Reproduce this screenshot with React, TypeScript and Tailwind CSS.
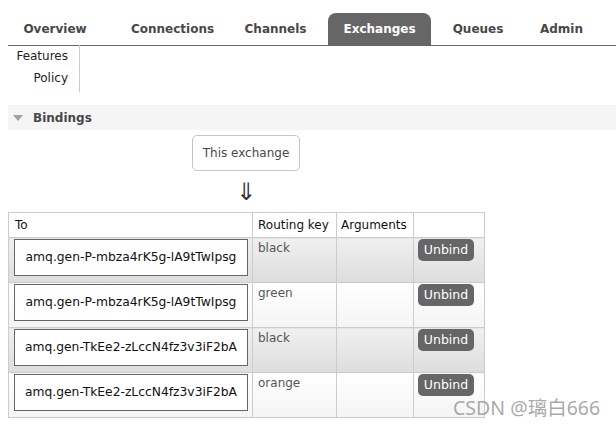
import React from "react";

const tabs = [
  { name: "Overview", w: "w-[94px]", ml: "" },
  { name: "Connections", w: "w-[141px]", ml: "" },
  { name: "Channels", w: "w-[65px]", ml: "" },
  { name: "Exchanges", w: "w-[103px]", ml: "ml-[20px]", active: true },
  { name: "Queues", w: "w-[94px]", ml: "" },
  { name: "Admin", w: "w-[73px]", ml: "" },
];

const rows = [
  { to: "amq.gen-P-mbza4rK5g-lA9tTwIpsg", key: "black", alt: 1 },
  { to: "amq.gen-P-mbza4rK5g-lA9tTwIpsg", key: "green", alt: 2 },
  { to: "amq.gen-TkEe2-zLccN4fz3v3iF2bA", key: "black", alt: 1 },
  { to: "amq.gen-TkEe2-zLccN4fz3v3iF2bA", key: "orange", alt: 2 },
];

export default function App() {
  return (
    <div
      className="relative w-[616px] h-[428px] bg-white text-[12px] text-[#484848] overflow-hidden"
      style={{ fontFamily: '"DejaVu Sans", Verdana, sans-serif' }}
    >
      {/* Tabs */}
      <div className="ml-[8px] pt-[13px] border-b border-[#666] flex">
        {tabs.map((t) => (
          <div
            key={t.name}
            className={`${t.w} ${t.ml} h-[32px] flex items-center justify-center whitespace-nowrap font-bold ${
              t.active ? "bg-[#666] text-white rounded-t-[8px]" : "text-[#484848]"
            }`}
          >
            {t.name}
          </div>
        ))}
      </div>

      {/* Sub nav */}
      <div className="ml-[8px] w-[72px] border-r border-[#ccc] pr-[11px] pb-[2px] text-right text-[#222] leading-[22px]">
        <div className="-mt-[1px]">Features</div>
        <div className="pb-[1px]">Policy</div>
      </div>

      {/* Bindings section header */}
      <div className="ml-[8px] mt-[13px] h-[25px] bg-[#f5f5f5] flex items-center">
        <svg width="10" height="6" viewBox="0 0 10 6" className="ml-[5px]">
          <polygon points="0,0 10,0 5,6" fill="#a0a0a0" />
        </svg>
        <span className="ml-[10px] font-bold text-[12px] text-[#484848]">Bindings</span>
      </div>

      {/* Diagram */}
      <div className="ml-[8px] w-[476px] flex flex-col items-center">
        <div className="mt-[5px] h-[36px] px-[10px] border border-[#c4c4c4] rounded-[5px] flex items-center text-[#484848] whitespace-nowrap">
          This exchange
        </div>
        <div className="h-[41px] flex items-center justify-center text-[24px] leading-none text-[#333]">
          ⇓
        </div>
      </div>

      {/* Table */}
      <table className="ml-[8px] border-collapse text-[12px]">
        <thead>
          <tr className="bg-white">
            <th className="w-[244px] border border-[#ccc] text-left font-normal text-[#111] px-[6px] h-[25px] leading-[15px]">
              To
            </th>
            <th className="w-[84px] border border-[#ccc] text-left font-normal text-[#111] px-[5px] leading-[15px] whitespace-nowrap">
              Routing key
            </th>
            <th className="w-[77px] border border-[#ccc] text-left font-normal text-[#111] px-[4px] leading-[15px]">
              Arguments
            </th>
            <th className="w-[71px] border border-[#ccc]"></th>
          </tr>
        </thead>
        <tbody>
          {rows.map((r, i) => {
            const bg =
              r.alt === 1
                ? "bg-gradient-to-b from-[#f0f0f0] to-[#dddddd]"
                : "bg-gradient-to-b from-[#ffffff] to-[#f4f4f4]";
            return (
              <tr key={i}>
                <td className={`${bg} border border-[#ccc] align-top pl-[5px] pr-[4px] pt-[1px] pb-[6px]`}>
                  <div className="h-[37px] border border-[#666] bg-white flex items-center justify-center text-[12.3px] text-[#111] whitespace-nowrap">
                    {r.to}
                  </div>
                </td>
                <td className={`${bg} border border-[#ccc] align-top px-[5px] pt-[3px] text-[#555] leading-[15px]`}>
                  {r.key}
                </td>
                <td className={`${bg} border border-[#ccc]`}></td>
                <td className={`${bg} border border-[#ccc] align-top pl-[4px] pt-[1px]`}>
                  <div className="w-[56px] h-[22px] bg-[#666] rounded-[5px] text-white text-[12.5px] font-normal flex items-center justify-center">
                    Unbind
                  </div>
                </td>
              </tr>
            );
          })}
        </tbody>
      </table>

      {/* Watermark */}
      <div
        className="absolute left-[453px] top-[395px] text-[19.5px] leading-[26px] text-[rgba(140,140,140,0.75)] whitespace-nowrap"
        style={{ fontFamily: '"Noto Sans", "Noto Sans CJK SC", sans-serif' }}
      >
        CSDN @璃白666
      </div>
    </div>
  );
}
